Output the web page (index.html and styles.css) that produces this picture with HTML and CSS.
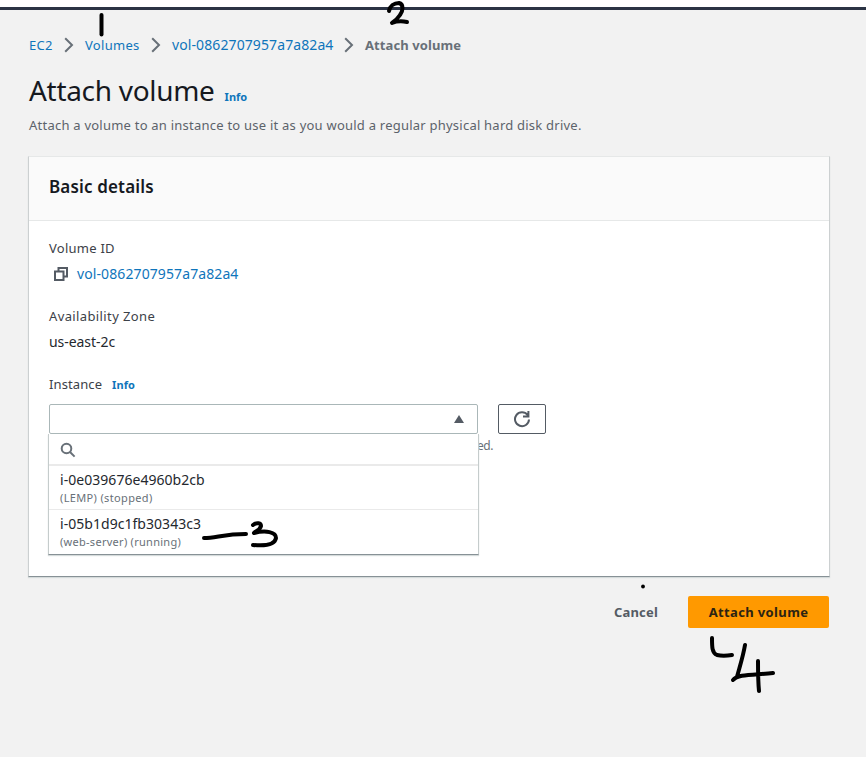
FILE: index.html
```html
<!DOCTYPE html>
<html lang="en">
<head>
<meta charset="utf-8">
<title>Attach volume</title>
<link rel="stylesheet" href="styles.css">
</head>
<body>
<header class="topbar"></header>
<main class="page">
  <nav class="crumbs">
    <a class="ec2">EC2</a>
    <svg class="chev" viewBox="0 0 10 16"><path d="M1.200 1.200 8 8l-6.800 6.800"/></svg>
    <a class="vols">Volumes</a>
    <svg class="chev" viewBox="0 0 10 16"><path d="M1.200 1.200 8 8l-6.800 6.800"/></svg>
    <a class="vol-id">vol-0862707957a7a82a4</a>
    <svg class="chev" viewBox="0 0 10 16"><path d="M1.200 1.200 8 8l-6.800 6.800"/></svg>
    <span class="current">Attach volume</span>
  </nav>
  <div class="heading"><h1>Attach volume</h1><a class="info">Info</a></div>
  <p class="lead">Attach a volume to an instance to use it as you would a regular physical hard disk drive.</p>

  <section class="card">
    <h2><span>Basic details</span></h2>
    <div class="card-body">
      <div class="label volume-label">Volume ID</div>
      <div class="volume-row">
        <svg class="copy" viewBox="0 0 14 14"><path d="M4.500 4V1H13v8.500h-3M1 4.500h8.500V13H1z"/></svg>
        <a class="vol-id">vol-0862707957a7a82a4</a>
      </div>
      <div class="label zone-label">Availability Zone</div>
      <div class="zone">us-east-2c</div>
      <div class="label instance-label"><span>Instance</span><a class="info">Info</a></div>
      <div class="controls">
        <div class="select">
          <svg class="caret" viewBox="0 0 10 8"><path d="M5 0 10 8H0z"/></svg>
          <div class="menu">
            <div class="search"><svg viewBox="0 0 16 16"><circle cx="6.500" cy="6.500" r="4.800"/><path d="m10 10 4.600 4.600"/></svg></div>
            <div class="option"><span class="id-one">i-0e039676e4960b2cb</span><small class="tag-one">(LEMP) (stopped)</small></div>
            <div class="option"><span class="id-two">i-05b1d9c1fb30343c3</span><small class="tag-two">(web-server) (running)</small></div>
          </div>
        </div>
        <button class="refresh"><svg viewBox="0 0 18 18"><path d="M14.600 5A7 7 0 1 0 16 9.500M15.400 1v5.400H10"/></svg></button>
      </div>
      <div class="hint">ed.</div>
    </div>
  </section>
  <div class="actions"><button class="cancel">Cancel</button><button class="primary">Attach volume</button></div>
</main>
<svg class="ink" viewBox="0 0 866 757">
  <path d="M101.500 15v19.500"/>
  <path d="M389 11c1-5 5-8 10-8 5 1 4 8 1 12-2 3-5 6-8 8 5-2 10-2 15-1"/>
  <path d="M204 538c12 0 20-4 42-4"/>
  <path d="M253 525c4-3 8-2 8 1-1 4-5 5-7 7 12-3 22-1 22 5-1 7-12 8-23 7"/>
  <path d="M712 638c0 9 0 15 5 17 4 1 9 1 15 0"/>
  <path d="M745 645c-2 12-6 24-8 32l-4 3c4-6 20-5 40-7M758 661c0 10 0 20 1 30"/>
  <circle cx="643" cy="586.500" r="1.900"/>
</svg>
</body>
</html>
```

FILE: styles.css
```css
* { box-sizing: border-box; }
body { margin: 0; height: 757px; overflow: hidden; position: relative; background: #f2f2f2; font: 14px/20px "Noto Sans", sans-serif; color: #24282e; }
a { color: #0f75bb; }
h1, h2, p { margin: 0; font-weight: 400; }
svg { display: block; fill: none; }
button { font: inherit; padding: 0; margin: 0; }
.topbar { height: 10px; background: #fff; border-bottom: 3px solid #2b3344; }
.page { padding: 25px 37px 0 29px; }
.crumbs { display: flex; align-items: center; height: 20px; white-space: nowrap; }
.crumbs > a, .current { font-size: 13px; }
.crumbs .ec2 { width: 24px; letter-spacing: .3px; }
.crumbs .vols { width: 55px; letter-spacing: .3px; }
.crumbs .vol-id { width: 162px; margin-right: -1px; }
.card .vol-id, .crumbs .vol-id { font-size: 14px; letter-spacing: .1px; }
.chev { width: 10px; height: 16px; margin: 0 11px; stroke: #687078; stroke-width: 2; }
.current { font-weight: 700; color: #687078; letter-spacing: .1px; }
.heading { display: flex; align-items: baseline; height: 36px; margin-top: 17px; }
h1 { font-size: 28px; line-height: 36px; letter-spacing: -.3px; color: #16191f; }
.info { font-size: 11px; font-weight: 700; margin-left: 10px; }
.lead { font-size: 13px; line-height: 20px; margin-top: 7px; color: #5c636b; white-space: nowrap; letter-spacing: .23px; }
.card { margin: 21px 0 0 -1px; width: 802px; height: 421px; background: #fff; border: 1px solid #ccd0d1; border-top-color: #e6e8e8; border-bottom-color: #879196; box-shadow: 0 1px 1px #d5dbdb; }
h2 { height: 64px; padding: 20px; background: #fafafa; border-bottom: 1px solid #e6e8e8; font-size: 17px; line-height: 20px; font-weight: 600; letter-spacing: .15px; color: #16191f; }
.card-body { padding: 17px 20px 0; font-size: 13px; }
.label { height: 20px; color: #3c4148; letter-spacing: .38px; }
.volume-label { letter-spacing: .25px; }
.volume-row { display: flex; align-items: center; height: 20px; margin-top: 6px; padding-left: 5px; }
.copy { width: 14px; height: 14px; margin-right: 9px; stroke: #545b64; stroke-width: 2; }
.zone-label { margin-top: 22px; }
.zone { height: 20px; margin-top: 6px; font-size: 14px; letter-spacing: -.05px; }
.instance-label { display: flex; align-items: baseline; margin-top: 22px; letter-spacing: .1px; }
.controls { display: flex; gap: 20px; margin-top: 10px; }
.select { width: 429px; height: 30px; border: 1px solid #aab7b8; border-radius: 2px; position: relative; }
.caret { width: 10px; height: 8px; margin: 10px 13px 0 auto; fill: #545b64; }
.menu { position: absolute; top: 29px; left: -2px; width: 431px; height: 121px; background: #fff; border: solid #c5cccc; border-width: 0 1px 1px; border-bottom-color: #879196; box-shadow: 0 1px 1px #d5dbdb; }
.search { height: 32px; padding: 8px 11px; border-bottom: 2px solid #eaeaea; }
.search svg { width: 16px; height: 16px; stroke: #687078; stroke-width: 2; }
.option { height: 44px; padding: 4px 11px; border-bottom: 1px solid #eaeaea; }
.option + .option { border: 0; }
.option span, .option small { display: block; white-space: nowrap; }
.option span { font-size: 14px; line-height: 20px; letter-spacing: .04px; }
.option small { font-size: 11px; line-height: 15px; color: #687078; letter-spacing: .35px; }
.option .tag-two { letter-spacing: .28px; }
.refresh { display: grid; place-items: center; width: 48px; height: 30px; border: 1px solid #545b64; border-radius: 2px; background: #fff; }
.refresh svg { width: 18px; height: 18px; stroke: #545b64; stroke-width: 2; }
.hint { margin: 3px 0 0 428px; font-size: 12px; line-height: 18px; letter-spacing: -.4px; color: #687078; }
.actions { display: flex; justify-content: flex-end; margin-top: 19px; font-size: 13px; font-weight: 700; }
.actions button { height: 32px; border: 0; }
.cancel { width: 46px; margin-right: 29px; background: none; color: #545b64; letter-spacing: .2px; }
.primary { width: 141px; border-radius: 2px; background: #ff9900; color: #2b2413; letter-spacing: .36px; }
.ink { position: absolute; inset: 0; width: 866px; height: 757px; stroke: #000; stroke-width: 4; stroke-linecap: round; stroke-linejoin: round; pointer-events: none; }
.ink circle { fill: #000; stroke: none; }
```
